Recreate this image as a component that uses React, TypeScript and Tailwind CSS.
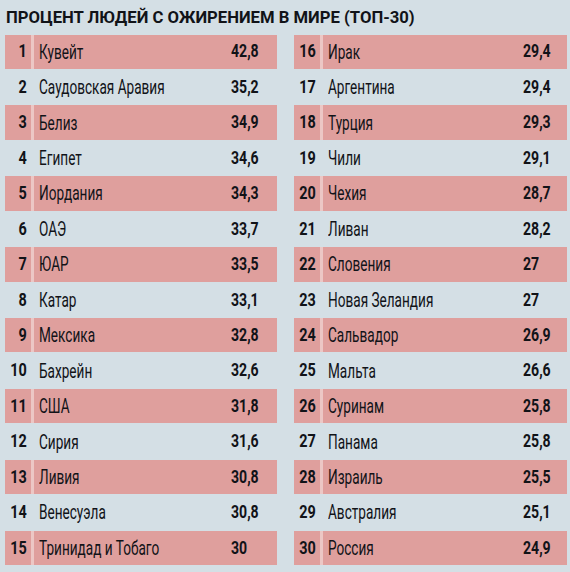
import React from 'react';

type Row = { n: number; name: string; value: string };

const left: Row[] = [
  { n: 1, name: 'Кувейт', value: '42,8' },
  { n: 2, name: 'Саудовская Аравия', value: '35,2' },
  { n: 3, name: 'Белиз', value: '34,9' },
  { n: 4, name: 'Египет', value: '34,6' },
  { n: 5, name: 'Иордания', value: '34,3' },
  { n: 6, name: 'ОАЭ', value: '33,7' },
  { n: 7, name: 'ЮАР', value: '33,5' },
  { n: 8, name: 'Катар', value: '33,1' },
  { n: 9, name: 'Мексика', value: '32,8' },
  { n: 10, name: 'Бахрейн', value: '32,6' },
  { n: 11, name: 'США', value: '31,8' },
  { n: 12, name: 'Сирия', value: '31,6' },
  { n: 13, name: 'Ливия', value: '30,8' },
  { n: 14, name: 'Венесуэла', value: '30,8' },
  { n: 15, name: 'Тринидад и Тобаго', value: '30' },
];

const right: Row[] = [
  { n: 16, name: 'Ирак', value: '29,4' },
  { n: 17, name: 'Аргентина', value: '29,4' },
  { n: 18, name: 'Турция', value: '29,3' },
  { n: 19, name: 'Чили', value: '29,1' },
  { n: 20, name: 'Чехия', value: '28,7' },
  { n: 21, name: 'Ливан', value: '28,2' },
  { n: 22, name: 'Словения', value: '27' },
  { n: 23, name: 'Новая Зеландия', value: '27' },
  { n: 24, name: 'Сальвадор', value: '26,9' },
  { n: 25, name: 'Мальта', value: '26,6' },
  { n: 26, name: 'Суринам', value: '25,8' },
  { n: 27, name: 'Панама', value: '25,8' },
  { n: 28, name: 'Израиль', value: '25,5' },
  { n: 29, name: 'Австралия', value: '25,1' },
  { n: 30, name: 'Россия', value: '24,9' },
];

// the source uses a condensed DIN-like face, so squeeze Roboto horizontally
const RankTable = ({ rows, valueCol }: { rows: Row[]; valueCol: string }) => (
  <div className="flex flex-col">
    {rows.map((r, i) => {
      const pink = i % 2 === 0;
      return (
        <div key={r.n} className="flex h-[35.45px] py-[0.5px]">
          <div
            className={`w-[26px] flex items-center justify-end pr-[4px] ${pink ? 'bg-[#df9f9d]' : ''}`}
          >
            <span className="inline-block text-[19px] font-bold scale-x-[0.76] origin-right">{r.n}</span>
          </div>
          <div className={`w-[3px] ${pink ? 'bg-[#ecc7c5]' : ''}`}></div>
          <div className={`flex-1 flex items-center ${pink ? 'bg-[#df9f9d]' : ''}`}>
            <div className="pl-[5px] flex-1">
              <span className="inline-block text-[20px] scale-x-[0.68] origin-left whitespace-nowrap">{r.name}</span>
            </div>
            <div className={valueCol}>
              <span className="inline-block text-[19px] font-bold scale-x-[0.74] origin-left">{r.value}</span>
            </div>
          </div>
        </div>
      );
    })}
  </div>
);

export default function App() {
  return (
    <div className="w-[570px] h-[572px] bg-[#d4dfe5] text-[#111318] overflow-hidden font-['Roboto',sans-serif]">
      <h1 className="pl-[6px] pt-[6px] h-[34px] leading-[22px] whitespace-nowrap">
        <span className="inline-block text-[17px] font-bold scale-x-[0.98] origin-left">
          ПРОЦЕНТ ЛЮДЕЙ С ОЖИРЕНИЕМ В МИРЕ (ТОП-30)
        </span>
      </h1>
      <div className="grid grid-cols-[272px_273px] gap-x-[17px] pl-[5px]">
        <RankTable rows={left} valueCol="w-[46px]" />
        <RankTable rows={right} valueCol="w-[44px]" />
      </div>
    </div>
  );
}
